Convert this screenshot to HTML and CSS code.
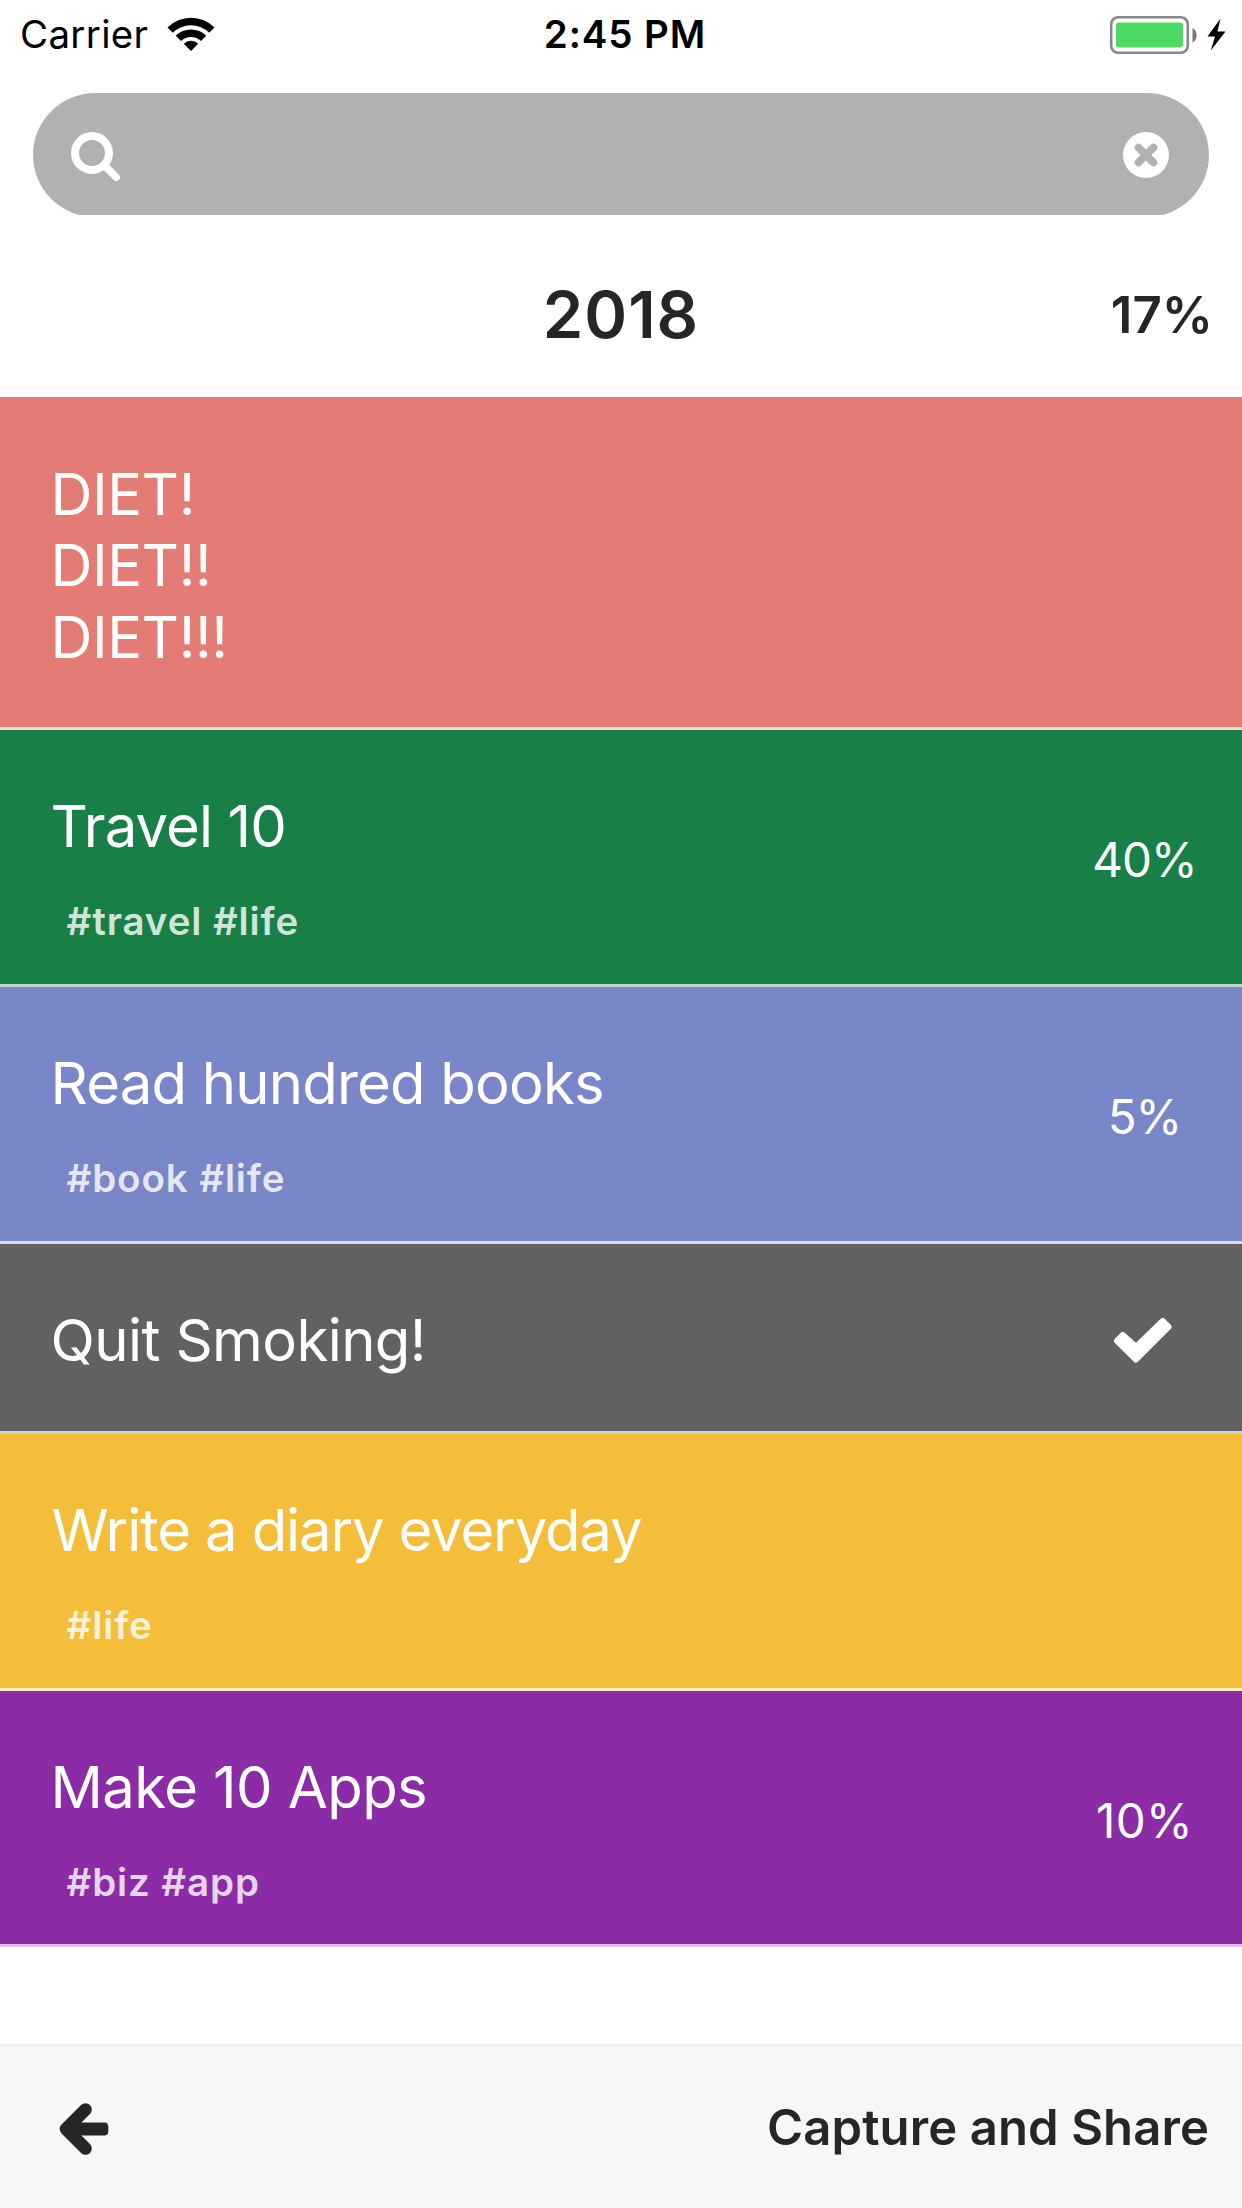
FILE: index.html
```html
<!DOCTYPE html>
<html lang="en">

<head>
  <meta charset="UTF-8" />
  <meta name="viewport" content="width=device-width, initial-scale=1.0" />
  <title>Bucket List 2018</title>
  <link rel="stylesheet" href="styles.css">
</head>

<body>
  <div class="wrap">
    <!-- status bar -->
    <div class="statusBar">
      <div class="carrier">
        <span>Carrier</span>
        <svg class="wifi" width="48" height="36" viewBox="0 0 48 36">
          <path d="M0.5 10.5A33.5 33.5 0 0 1 47.5 10.5L42.2 15.8A26 26 0 0 0 5.8 15.8Z" />
          <path d="M8.7 18.7A21.7 21.7 0 0 1 39.3 18.7L33.9 24A14.1 14.1 0 0 0 14.1 24Z" />
          <path d="M16.8 26.8A10.2 10.2 0 0 1 31.2 26.8L24 34Z" />
        </svg>
      </div>
      <span class="time">2:45 PM</span>
      <div class="battery">
        <svg width="118" height="40" viewBox="0 0 118 40">
          <rect x="2.2" y="2.2" width="76.6" height="35.6" rx="7" fill="none" stroke="#888" stroke-width="2.6" />
          <rect x="7" y="7.5" width="67" height="25" rx="3" fill="#4cd964" />
          <path d="M83.5 13C89 15.5 89 25 83.5 27.5Z" fill="#777" />
          <path d="M111.5 3.5L98.5 21.5H106L101.8 35.5L116.5 16.5H108.5Z" />
        </svg>
      </div>
    </div>

    <!-- search -->
    <div class="searchWrap">
      <div class="search">
        <svg class="glass" width="52" height="52" viewBox="0 0 52 52" fill="none" stroke="#fff" stroke-width="8" stroke-linecap="round">
          <circle cx="22" cy="22" r="17" />
          <path d="M35 35L46.3 46.3" stroke-width="7.5" />
        </svg>
        <svg width="48" height="48" viewBox="0 0 48 48">
          <circle cx="24" cy="24" r="23" fill="#fff" />
          <path d="M16.5 16.5L31.5 31.5M31.5 16.5L16.5 31.5" stroke="#b1b1b1" stroke-width="7.6" stroke-linecap="round" />
        </svg>
      </div>
    </div>

    <header class="header">
      <h1>2018</h1>
      <span class="total">17%</span>
    </header>

    <!-- list -->
    <ul class="list">
      <li class="item diet">
        <div class="text">
          <p class="title">DIET!<br>DIET!!<br>DIET!!!</p>
        </div>
      </li>
      <li class="item travel">
        <div class="text">
          <p class="title">Travel 10</p>
          <p class="tag">#travel #life</p>
        </div>
        <span class="rate">40%</span>
      </li>
      <li class="item book">
        <div class="text">
          <p class="title">Read hundred books</p>
          <p class="tag">#book #life</p>
        </div>
        <span class="rate">5%</span>
      </li>
      <li class="item smoking">
        <div class="text">
          <p class="title">Quit Smoking!</p>
        </div>
        <span class="rate">
          <svg width="60" height="49" viewBox="0 0 60 49">
            <path d="M4 24.8L9.7 19L23 30.8L49.8 5L55.5 10.8L23 43.5Z" fill="#fff" stroke="#fff" stroke-width="6" stroke-linejoin="round" />
          </svg>
        </span>
      </li>
      <li class="item diary">
        <div class="text">
          <p class="title">Write a diary everyday</p>
          <p class="tag">#life</p>
        </div>
      </li>
      <li class="item apps">
        <div class="text">
          <p class="title">Make 10 Apps</p>
          <p class="tag">#biz #app</p>
        </div>
        <span class="rate">10%</span>
      </li>
    </ul>

    <!-- bottom bar -->
    <footer class="footer">
      <svg width="50" height="54" viewBox="0 0 50 54">
        <path d="M26.5 7.5L7 27L26.5 46.5" fill="none" stroke="#262626" stroke-width="12.6" stroke-linecap="round" stroke-linejoin="round" />
        <rect x="10" y="20.5" width="39.3" height="13" rx="4" fill="#262626" />
      </svg>
      <span class="share">Capture and Share</span>
    </footer>
  </div>
</body>

</html>
```
FILE: styles.css
```css
* {
  margin: 0;
  padding: 0;
  box-sizing: border-box;
  font-family: "Inter", "Liberation Sans", sans-serif;
}

ul {
  list-style: none;
}

svg {
  display: block;
}

.wrap {
  display: flex;
  flex-direction: column;
  width: 1242px;
  height: 2208px;
  background-color: #fff;
  color: #262626;
  overflow: hidden;
}

/* status bar */
.statusBar {
  display: grid;
  grid-template-columns: 1fr auto 1fr;
  height: 69px;
  margin-bottom: 24px;
  line-height: 69px;
  font-size: 38.5px;
  color: #000;
}

.carrier {
  display: flex;
  align-items: center;
  padding-left: 20px;
  letter-spacing: 0.3px;
}

.wifi {
  margin-left: 19px;
}

.time {
  padding-left: 8px;
  font-weight: 600;
  letter-spacing: 0.9px;
}

.battery {
  display: flex;
  justify-content: flex-end;
  align-items: center;
  padding-right: 15px;
}

/* search: the pill is a little taller than its wrap */
.searchWrap {
  height: 122px;
  padding: 0 33px;
  overflow: hidden;
}

.search {
  display: flex;
  justify-content: space-between;
  align-items: center;
  height: 124px;
  padding: 0 39px 0 37px;
  border-radius: 62px;
  background-color: #b1b1b1;
}

.glass {
  margin-top: 4px;
}

/* header */
.header {
  display: grid;
  grid-template-columns: 1fr auto 1fr;
  align-items: center;
  height: 182px;
  padding-top: 17px;
}

.header h1 {
  grid-column: 2;
  font-size: 65px;
  font-weight: 600;
  letter-spacing: 1px;
}

.total {
  padding-right: 29px;
  font-size: 51px;
  font-weight: 600;
  text-align: right;
}

/* list */
.item {
  display: flex;
  justify-content: space-between;
  height: 257px;
  border-bottom: 3px solid rgba(255, 255, 255, 0.7);
  color: #fff;
}

.text {
  padding: 61px 0 0 50.5px;
}

.title {
  font-size: 58px;
  line-height: 71.3px;
  letter-spacing: -0.6px;
}

.tag {
  margin: 35.6px 0 0 16px;
  font-size: 38.5px;
  font-weight: 600;
  line-height: 46px;
  letter-spacing: 0.9px;
  opacity: 0.8;
}

.rate {
  display: flex;
  justify-content: center;
  align-items: center;
  width: 198px;
  padding-top: 5px;
  font-size: 47.5px;
  letter-spacing: -1px;
}

.travel .rate,
.book .rate,
.apps .rate {
  padding-left: 3px;
}

.diet {
  height: 333px;
  background-color: #e37c74;
}

.diet .text {
  padding-top: 62px;
}

.diet .title {
  letter-spacing: -0.4px;
}

.travel {
  background-color: #187f46;
}

.travel .title {
  letter-spacing: -0.9px;
}

.book {
  background-color: #7986c7;
}

.book .title {
  letter-spacing: -0.8px;
}

.smoking {
  height: 190px;
  background-color: #616161;
}

.diary {
  background-color: #f4be3a;
}

.diary .title {
  padding-left: 1px;
  letter-spacing: -1.15px;
}

.apps {
  height: 256px;
  background-color: #8b2ba5;
}

.apps .rate {
  letter-spacing: 0.3px;
}

/* bottom bar */
.footer {
  display: flex;
  justify-content: space-between;
  align-items: center;
  height: 164px;
  margin-top: auto;
  padding: 2px 33px 0 59px;
  border-top: 3px solid #eee;
  background-color: #f7f7f7;
}

.share {
  padding-bottom: 3px;
  font-size: 49px;
  font-weight: 600;
  letter-spacing: 0.1px;
}
```
